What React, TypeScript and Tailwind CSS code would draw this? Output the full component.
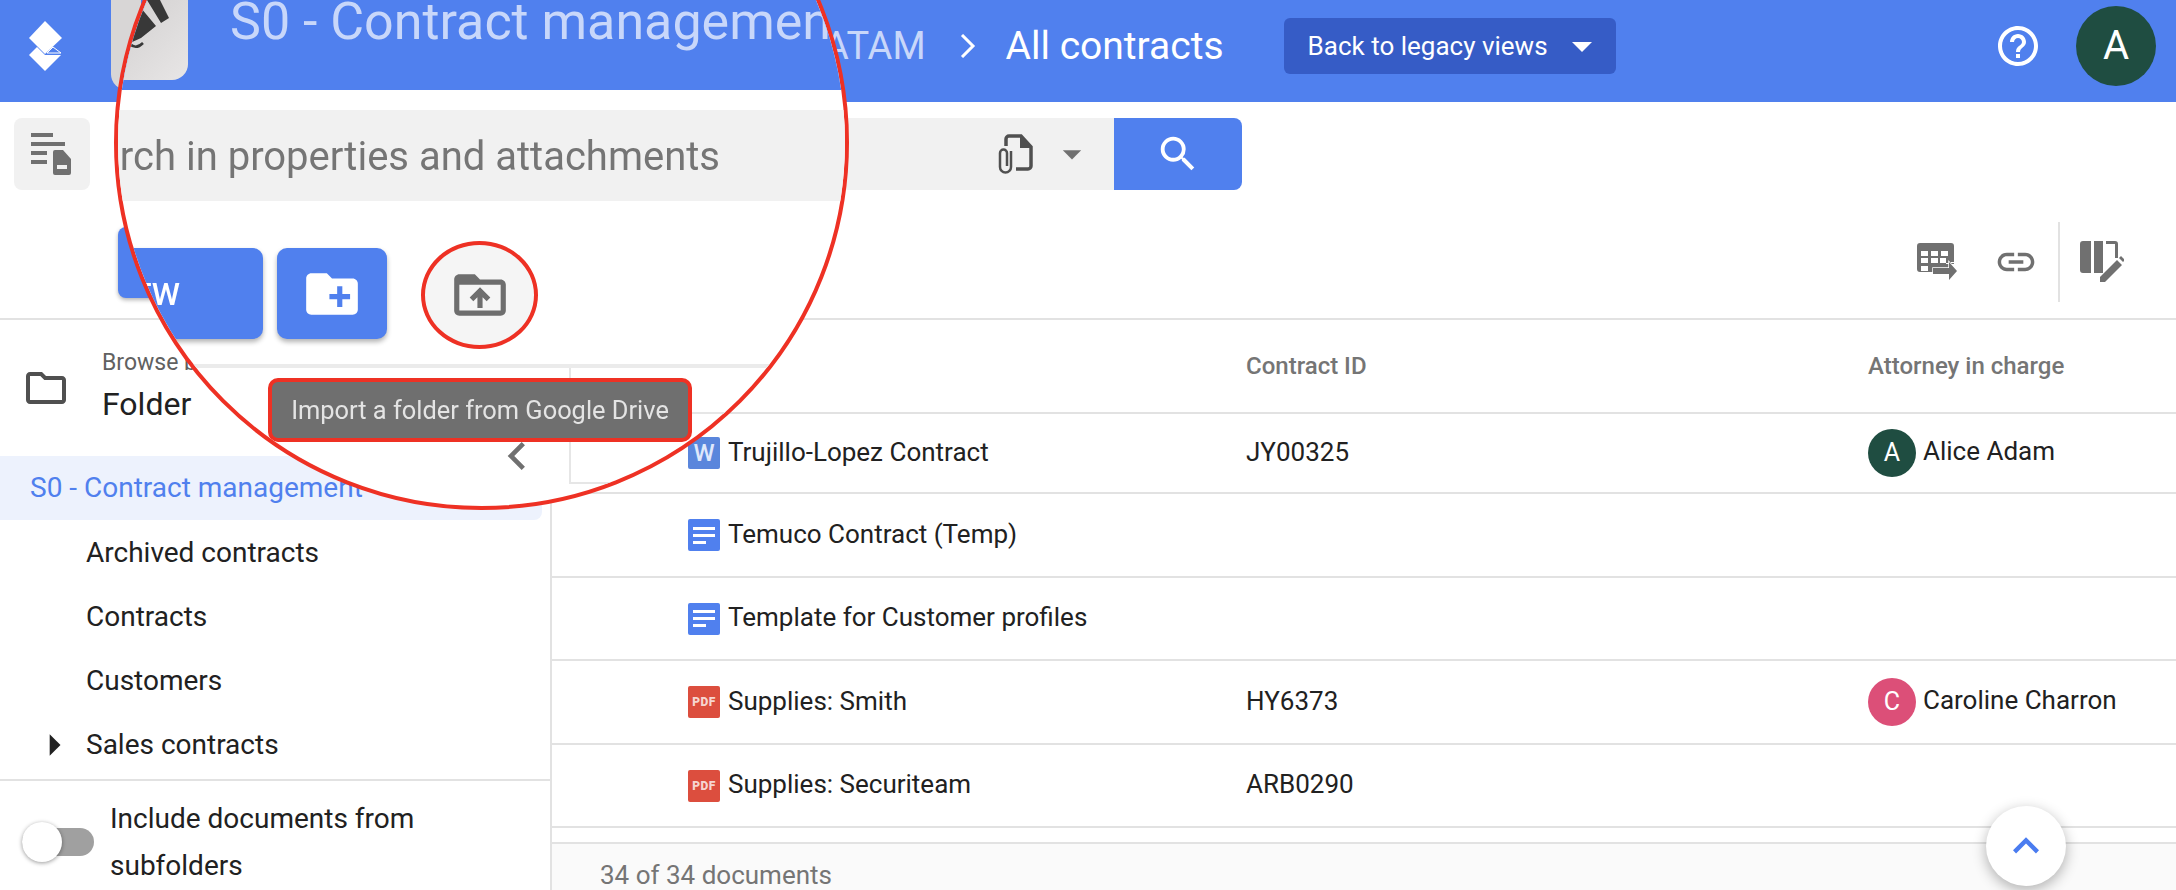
import {
  MdArrowDropDown,
  MdArrowRight,
  MdChevronLeft,
  MdCreateNewFolder,
  MdDriveFolderUpload,
  MdHelpOutline,
  MdKeyboardArrowUp,
  MdLink,
  MdOutlineFolder,
  MdSearch,
} from "react-icons/md";

const rows = [
  { name: "Trujillo-Lopez Contract", kind: "word", id: "JY00325", who: "Alice Adam", h: "h-[80px]" },
  { name: "Temuco Contract (Temp)", kind: "doc", id: "", who: "", h: "h-[84px]" },
  { name: "Template for Customer profiles", kind: "doc", id: "", who: "", h: "h-[83px]" },
  { name: "Supplies: Smith", kind: "pdf", id: "HY6373", who: "Caroline Charron", h: "h-[84px]" },
  { name: "Supplies: Securiteam", kind: "pdf", id: "ARB0290", who: "", h: "h-[83px]" },
];

function Logo() {
  return (
    <svg width="34" height="52" viewBox="29 20 34 52" fill="#fff">
      <path d="M45 21 62 38 45 54 29 38z" />
      <path d="M29 55 37 47 45 55 53 55 61 55 45 71z" />
      <path d="M47 53 53 47 61 53z" fill="none" stroke="#fff" strokeWidth="1" />
    </svg>
  );
}

function DocListIcon() {
  return (
    <svg width="42" height="42" viewBox="0 0 42 42" fill="#707070">
      <path d="M0 0h22v4H0zM0 9h34v4H0zM0 18h16v4H0zM0 27h16v4H0z" />
      <path
        fillRule="evenodd"
        d="M22 19a2 2 0 0 1 2-2h8l8 9v14a2 2 0 0 1-2 2H24a2 2 0 0 1-2-2zM26 32v4h10v-4z"
      />
    </svg>
  );
}

function ClipDocIcon() {
  return (
    <svg width="36" height="40" viewBox="0 0 36 40" fill="none" stroke="#505050">
      <path d="M8 12V5a3 3 0 0 1 3-3h12l10 11v19a3 3 0 0 1-3 3H18" strokeWidth="3.5" />
      <path d="M23 2v11h10" fill="#505050" strokeWidth="2" />
      <path d="M13 17v16a5 5 0 0 1-11 0V19a3.5 3.5 0 0 1 7 0v13" strokeWidth="2.5" />
    </svg>
  );
}

function TableExportIcon() {
  return (
    <svg width="42" height="38" viewBox="0 0 42 38" fill="#707070">
      <path
        fillRule="evenodd"
        d="M3 0h31a3 3 0 0 1 3 3v18h-8v-1h-6v-5h6v5h8v-1l-3 0v10H3a3 3 0 0 1-3-3V3a3 3 0 0 1 3-3zM4 8v5h7V8zM14 8v5h7V8zM24 8v5h7V8zM4 15v5h7v-5zM14 15v5h7v-5zM4 23v5h7v-5z"
      />
      <path d="M16 25h16v-6l8 9-8 9v-6H16z" stroke="#fff" strokeWidth="1.5" paintOrder="stroke" />
    </svg>
  );
}

function ColumnEditIcon() {
  return (
    <svg width="44" height="42" viewBox="0 0 44 42" fill="#707070">
      <path d="M3 0h8v32H3a3 3 0 0 1-3-3V3a3 3 0 0 1 3-3zM14 0h9v32h-9z" />
      <path d="M26 0h9a3 3 0 0 1 3 3v14h-3V3h-9z" />
      <path d="M20 36 37 19l5 5-17 17h-5zM39 17l2-2 4 4-2 2z" />
    </svg>
  );
}

function FileIcon({ kind }: { kind: string }) {
  if (kind === "word") {
    return (
      <div className="flex h-8 w-8 items-center justify-center rounded-[2px] bg-[#5a86dc] text-[24px] leading-none font-medium text-[#dfe8fb]">
        W
      </div>
    );
  }
  if (kind === "pdf") {
    return (
      <div className="flex h-8 w-8 items-center justify-center rounded-[2px] bg-[#dc4e3e] text-[12px] leading-none font-black tracking-[0.5px] text-[#f6d5d0]">
        PDF
      </div>
    );
  }
  return (
    <div className="flex h-8 w-8 flex-col justify-center gap-[4px] rounded-[2px] bg-[#5080ee] px-[5px]">
      <div className="h-[3px] w-full bg-white" />
      <div className="h-[3px] w-full bg-white" />
      <div className="h-[3px] w-[60%] bg-white" />
    </div>
  );
}

function Person({ name }: { name: string }) {
  const alice = name.startsWith("A");
  return (
    <div className="flex items-center gap-[7px]">
      <div
        className={`flex h-12 w-12 items-center justify-center rounded-full text-[25px] text-white ${
          alice ? "bg-[#1f4d41]" : "bg-[#dc4f78]"
        }`}
      >
        {name[0]}
      </div>
      <span className="mb-[4px]">{name}</span>
    </div>
  );
}

// magnifier drawn over the page, inner canvas uses page coordinates
function Lens() {
  return (
    <div className="absolute top-[-225px] left-[114px] h-[735px] w-[735px] overflow-hidden rounded-full border-4 border-[#ee3124] bg-white">
      <div className="absolute top-[221px] left-[-118px] h-[890px] w-[2176px]">
        <div className="absolute top-0 left-0 h-[90px] w-full bg-[#5080ee]" />
        <div className="absolute top-0 left-[110px] h-[80px] w-[78px] rounded-br-[16px] bg-gradient-to-br from-[#d0cece] to-[#e8e6e6]">
          <svg width="78" height="80" viewBox="110 0 78 80" fill="#383838">
            <path d="M147 0h13l9 18-8 5zM141 8l15 18-15 12-11 5-2-7z" />
            <path d="M130 44q6 6 13-1" fill="none" stroke="#383838" strokeWidth="2.5" />
          </svg>
        </div>
        <div className="absolute top-[-9px] left-[230px] text-[52px] leading-[62px] whitespace-nowrap text-[#c8d7fa] blur-[0.5px]">
          S0 - Contract management
        </div>

        <div className="absolute top-[110px] left-0 h-[91px] w-full bg-[#f1f1f1]" />
        <div className="absolute top-[132px] right-[1456px] text-[40px] leading-[50px] whitespace-nowrap text-[#757575] blur-[0.5px]">
          Search in properties and attachments
        </div>

        <div className="absolute top-[248px] left-[100px] flex h-[91px] w-[163px] items-center justify-end rounded-[10px] bg-[#5080ee] pr-[83px] text-[32px] font-medium text-white shadow-[0_3px_5px_rgba(0,0,0,0.3)] blur-[0.3px]">
          NEW
        </div>
        <div className="absolute top-[248px] left-[277px] flex h-[91px] w-[110px] items-center justify-center rounded-[10px] bg-[#5080ee] text-white shadow-[0_3px_5px_rgba(0,0,0,0.3)]">
          <MdCreateNewFolder size={62} />
        </div>
        <div className="absolute top-[241px] left-[421px] flex h-[108px] w-[117px] items-center justify-center rounded-[50%] border-4 border-[#ee3124] bg-[#f5f5f5] text-[#6e6e6e]">
          <MdDriveFolderUpload size={62} />
        </div>

        <div className="absolute top-[364px] left-0 h-[4px] w-full bg-[#ebebeb]" />
        <div className="absolute top-[368px] left-[569px] h-[116px] w-[2px] bg-[#e6e6e6]" />
        <div className="absolute top-[412px] left-[569px] h-[2px] w-[300px] bg-[#e6e6e6]" />
        <div className="absolute top-[482px] left-[569px] h-[2px] w-[300px] bg-[#e6e6e6]" />

        <div className="absolute top-[378px] left-[268px] flex h-[64px] w-[424px] items-center justify-center rounded-[10px] border-4 border-[#ee3124] bg-[#6f6f6f] text-[25.4px] whitespace-nowrap text-[#e4e4e4] blur-[0.3px]">
          Import a folder from Google Drive
        </div>
        <div className="absolute top-[428px] left-[489px] text-[#707070]">
          <MdChevronLeft size={56} />
        </div>
      </div>
    </div>
  );
}

export default function App() {
  return (
    <div className="relative flex h-[890px] w-[2176px] flex-col overflow-hidden bg-white font-['Roboto',sans-serif] text-[26px] text-[#212121]">
      {/* Header */}
      <header className="flex h-[102px] shrink-0 items-center bg-[#5080ee] pr-[20px] pb-[10px] pl-[29px] text-white">
        <Logo />
        <div className="ml-[48px] h-[90px] w-[30px] self-start rounded-bl-[16px] bg-[#d8d6d6]" />
        <span className="ml-[683px] text-[38px] text-[#c8d7fa]">ATAM</span>
        <svg className="ml-[34px]" width="16" height="24" viewBox="0 0 16 24" fill="none" stroke="#fff" strokeWidth="3">
          <path d="M2 1l11 11L2 23" />
        </svg>
        <span className="ml-[30px] text-[39px]">All contracts</span>
        <button className="ml-[60px] flex h-[56px] w-[332px] items-center rounded-[6px] bg-[#365cc6] pl-[24px] text-[26px] text-white">
          Back to legacy views
          <MdArrowDropDown size={48} className="ml-[10px]" />
        </button>
        <div className="flex-1" />
        <MdHelpOutline size={48} />
        <div className="ml-[34px] flex h-20 w-20 items-center justify-center rounded-full bg-[#1f4d41] text-[40px]">A</div>
      </header>

      {/* Search */}
      <div className="mt-[16px] flex h-[72px] shrink-0 pl-[14px]">
        <div className="flex h-[72px] w-[76px] items-center justify-center rounded-[8px] bg-[#f1f1f1]">
          <DocListIcon />
        </div>
        <div className="ml-[40px] flex w-[984px] items-center justify-end bg-[#f1f1f1] pr-[20px]">
          <ClipDocIcon />
          <span className="ml-[16px] text-[#707070]">
            <MdArrowDropDown size={44} />
          </span>
        </div>
        <button className="flex w-[128px] items-center justify-center rounded-r-[8px] bg-[#5080ee] text-white">
          <MdSearch size={46} />
        </button>
      </div>

      {/* Actions */}
      <div className="flex h-[130px] shrink-0 items-center border-b-2 border-[#e2e2e2] pt-[16px] pr-[52px] pl-[118px]">
        <div className="mb-[20px] h-[71px] w-[80px] self-end rounded-[8px] bg-[#5080ee] shadow-[0_2px_4px_rgba(0,0,0,0.3)]" />
        <div className="flex-1" />
        <div className="mr-[-3px]">
          <TableExportIcon />
        </div>
        <span className="ml-[38px] text-[#707070]">
          <MdLink size={44} />
        </span>
        <div className="mx-[20px] h-[80px] w-[2px] bg-[#e2e2e2]" />
        <ColumnEditIcon />
      </div>

      <div className="flex min-h-0 flex-1">
        {/* Sidebar */}
        <aside className="flex w-[552px] shrink-0 flex-col border-r-2 border-[#e2e2e2] text-[28px]">
          <div className="flex h-[136px] shrink-0 items-start pt-[28px] pl-[22px]">
            <span className="mt-[16px] text-[#505050]">
              <MdOutlineFolder size={48} />
            </span>
            <div className="ml-[32px]">
              <div className="text-[23px] leading-[30px] text-[#616161]">Browse by</div>
              <div className="mt-[8px] text-[32px] leading-[36px]">Folder</div>
            </div>
          </div>
          <div className="flex h-[64px] w-[542px] shrink-0 items-center rounded-r-[8px] bg-[#edf2fd] pl-[30px] text-[#5080ee]">
            S0 - Contract management
          </div>
          {["Archived contracts", "Contracts", "Customers", "Sales contracts"].map((label) => (
            <div key={label} className="relative flex h-[64px] shrink-0 items-center pt-[2px] pl-[86px]">
              {label === "Sales contracts" && (
                <span className="absolute left-[28px] text-[#212121]">
                  <MdArrowRight size={52} />
                </span>
              )}
              {label}
            </div>
          ))}
          <div className="mt-[3px] flex flex-1 items-center border-t-2 border-[#e2e2e2] pt-[12px] pl-[22px]">
            <div className="relative h-[28px] w-[72px] shrink-0 rounded-full bg-[#a0a0a0]">
              <div className="absolute top-[-6px] left-0 h-[40px] w-[40px] rounded-full bg-white shadow-[0_1px_4px_rgba(0,0,0,0.4)]" />
            </div>
            <div className="ml-[16px] leading-[47px]">
              Include documents from
              <br />
              subfolders
            </div>
          </div>
        </aside>

        {/* Table */}
        <main className="flex min-w-0 flex-1 flex-col">
          <div className="grid h-[94px] shrink-0 grid-cols-[694px_622px_1fr] items-center border-b-2 border-[#e2e2e2] text-[24px] font-medium text-[#757575]">
            <div />
            <div>Contract ID</div>
            <div>Attorney in charge</div>
          </div>
          {rows.map((r) => (
            <div
              key={r.name}
              className={`grid shrink-0 grid-cols-[694px_622px_1fr] items-center border-b-2 border-[#e2e2e2] ${r.h}`}
            >
              <div className="flex items-center gap-2 pl-[136px]">
                <FileIcon kind={r.kind} />
                <span className="mb-[2px]">{r.name}</span>
              </div>
              <div className="mb-[2px]">{r.id}</div>
              <div>{r.who && <Person name={r.who} />}</div>
            </div>
          ))}
          <div className="h-[16px] shrink-0 border-b-2 border-[#e2e2e2]" />
          <div className="flex flex-1 items-center bg-[#fafafa] pt-[12px] pl-[48px] text-[#757575]">34 of 34 documents</div>
        </main>
      </div>

      <Lens />

      <button className="absolute top-[806px] left-[1986px] flex h-20 w-20 items-center justify-center rounded-full bg-white text-[#4a7cf0] shadow-[0_4px_14px_rgba(0,0,0,0.3)]">
        <MdKeyboardArrowUp size={52} />
      </button>
    </div>
  );
}
